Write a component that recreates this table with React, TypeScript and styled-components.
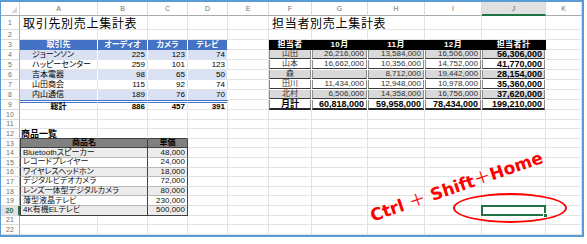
import React from "react";
import styled, { createGlobalStyle } from "styled-components";

const GlobalStyle = createGlobalStyle`
  html, body {
    margin: 0;
    padding: 0;
    background: #ffffff;
  }
  body {
    width: 587px;
    height: 244px;
    overflow: hidden;
    font-family: "Liberation Sans", "Noto Sans CJK JP", sans-serif;
  }
`;

type Align = "left" | "center" | "right";

const LETTERS = ["A", "B", "C", "D", "E", "F", "G", "H", "I", "J", "K"];
const COL_W = [19, 78, 50, 40, 40, 41, 43, 56, 57, 57, 64, 36];
const ROW_H = [14, 14, ...Array(8).fill(10), ...Array(13).fill(9.6)];
const GRID = "#e3e3e3";
const JP = `"Noto Sans CJK JP", sans-serif`;

const justify = (a?: Align) =>
  a === "right" ? "flex-end" : a === "center" ? "center" : "flex-start";

const Frame = styled.div`
  position: relative;
  display: grid;
  grid-template-columns: ${COL_W.map((w) => w + "px").join(" ")};
  grid-template-rows: ${ROW_H.map((h) => h + "px").join(" ")};
  width: max-content;
  border: 2px solid #5b9bd5;
  border-left-width: 1px;
  background: #fff;
  overflow: hidden;
`;

const Corner = styled.div`
  position: relative;
  box-sizing: border-box;
  border-right: 1px solid #d4d4d4;
  border-bottom: 1px solid #ababab;
  &::after {
    content: "";
    position: absolute;
    right: 2px;
    bottom: 2px;
    border-style: solid;
    border-width: 0 0 6px 6px;
    border-color: transparent transparent #d8d8d8 transparent;
  }
`;

const ColHead = styled.div<{ $active?: boolean }>`
  box-sizing: border-box;
  display: flex;
  align-items: center;
  justify-content: center;
  font-size: 7px;
  color: #6f6f6f;
  background: ${(p) => (p.$active ? "#e1e1e1" : "#fff")};
  border-right: 1px solid #dadada;
  border-bottom: ${(p) => (p.$active ? "2px solid #217346" : "1px solid #ababab")};
`;

const RowHead = styled.div<{ $active?: boolean }>`
  box-sizing: border-box;
  display: flex;
  align-items: center;
  justify-content: center;
  font-size: 7px;
  font-weight: ${(p) => (p.$active ? 700 : 400)};
  color: ${(p) => (p.$active ? "#217346" : "#6f6f6f")};
  background: ${(p) => (p.$active ? "#e1e1e1" : "#fff")};
  border-right: ${(p) => (p.$active ? "2px solid #217346" : "1px solid #ababab")};
  border-bottom: 1px solid #dadada;
`;

const Cell = styled.div<{ $span?: number; $align?: Align; $indent?: number }>`
  box-sizing: border-box;
  grid-column: span ${(p) => p.$span ?? 1};
  min-width: 0;
  display: flex;
  align-items: center;
  justify-content: ${(p) => justify(p.$align)};
  padding: 0 2px 0 ${(p) => p.$indent ?? 2}px;
  border-right: 1px solid ${GRID};
  border-bottom: 1px solid ${GRID};
  font-size: 8px;
  line-height: 1;
  color: #000;
  white-space: nowrap;
  font-feature-settings: "palt";
`;

const TitleCell = styled(Cell)`
  font-family: ${JP};
  font-size: 12px;
  letter-spacing: 0.7px;
  font-feature-settings: normal;
  padding-left: 3px;
`;

const SubTitle = styled(Cell)`
  font-family: ${JP};
  font-size: 9px;
  font-weight: 700;
  padding-left: 1px;
  border-bottom-color: #404040;
`;

/* 取引先別売上集計表 */
const BlueHead = styled(Cell)`
  background: #4472c4;
  color: #fff;
  font-weight: 700;
  border-right-color: #fff;
  border-bottom-color: #4472c4;
`;

const Band = styled(Cell)<{ $tint: boolean }>`
  background: ${(p) => (p.$tint ? "#d9e1f2" : "#fff")};
  border-right-color: ${(p) => (p.$tint ? "#fff" : GRID)};
  border-bottom-color: ${(p) => (p.$tint ? "#d9e1f2" : GRID)};
`;

const BlueTotal = styled(Cell)`
  font-weight: 700;
  border-top: 3px double #4472c4;
  padding-top: 1px;
`;

/* 担当者別売上集計表 */
const BlackHead = styled(Cell)`
  background: #000;
  color: #fff;
  font-weight: 700;
  letter-spacing: 0.4px;
  border-right-color: #000;
  border-bottom-color: #000;
`;

const BoxCell = styled(Cell)<{ $shade: boolean; $strong?: boolean }>`
  margin: 0 1px 1px 0;
  background: ${(p) => (p.$shade ? "#d9d9d9" : "#fff")};
  border-left: 1px solid #8c8c8c;
  border-right: 1px solid #8c8c8c;
  border-bottom: 1px solid #3a3a3a;
  color: ${(p) => (p.$strong ? "#000" : "#333")};
  font-size: ${(p) => (p.$strong ? 9 : 8)}px;
  font-weight: ${(p) => (p.$strong ? 700 : 400)};
`;

const BoxTotal = styled(BoxCell)`
  margin-bottom: 0;
  border-bottom: 2px solid #262626;
`;

/* 商品一覧 */
const GrayHead = styled(Cell)<{ $lead?: boolean }>`
  background: #808080;
  font-size: 8px;
  font-weight: 700;
  border-right: 1px solid #404040;
  border-left: ${(p) => (p.$lead ? "1px solid #404040" : "none")};
  border-bottom: 1px solid #404040;
`;

const ItemCell = styled(Cell)<{ $shade: boolean; $lead?: boolean; $last?: boolean }>`
  background: ${(p) => (p.$shade ? "#ececec" : "#fff")};
  font-size: 8px;
  color: #111;
  border-right: 1px solid #404040;
  border-left: ${(p) => (p.$lead ? "1px solid #404040" : "none")};
  border-bottom: 1px solid ${(p) => (p.$last ? "#404040" : "#b8b8b8")};
`;

const Selected = styled(Cell)`
  position: relative;
  &::before {
    content: "";
    position: absolute;
    inset: -1px -1px -1px -1px;
    border: 2px solid #217346;
  }
  &::after {
    content: "";
    position: absolute;
    right: -3px;
    bottom: -3px;
    width: 3px;
    height: 3px;
    background: #217346;
    border: 1px solid #fff;
  }
`;

const Callout = styled.div`
  position: absolute;
  left: 455px;
  top: 183px;
  transform: translate(-50%, -50%) rotate(-19deg);
  font-family: "DejaVu Sans", sans-serif;
  font-weight: 700;
  font-size: 17px;
  color: #ff0000;
  white-space: nowrap;
  pointer-events: none;
`;

const Plus = styled.span`
  font-family: ${JP};
  font-weight: 400;
`;

const Ring = styled.div`
  position: absolute;
  left: 452px;
  top: 191px;
  width: 114px;
  height: 30px;
  box-sizing: border-box;
  border: 2px solid #ff0000;
  border-radius: 50%;
  pointer-events: none;
`;

const SALES = [
  ["ジョーンソン", "225", "123", "74"],
  ["ハッピーセンター", "259", "101", "123"],
  ["吉本電器", "98", "65", "50"],
  ["山田商会", "115", "92", "74"],
  ["内山通信", "189", "76", "70"],
];

const STAFF = [
  ["山田", "26,216,000", "13,584,000", "16,506,000", "56,306,000"],
  ["山本", "16,662,000", "10,356,000", "14,752,000", "41,770,000"],
  ["森", "", "8,712,000", "19,442,000", "28,154,000"],
  ["田川", "11,434,000", "12,948,000", "10,978,000", "35,360,000"],
  ["北村", "6,506,000", "14,358,000", "16,756,000", "37,620,000"],
];

const ITEMS = [
  ["Bluetoothスピーカー", "48,000"],
  ["レコードプレイヤー", "24,000"],
  ["ワイヤレスヘッドホン", "18,000"],
  ["デジタルビデオカメラ", "72,000"],
  ["レンズ一体型デジタルカメラ", "80,000"],
  ["薄型液晶テレビ", "230,000"],
  ["4K有機ELテレビ", "500,000"],
];

const layout = new Map<string, { span: number; el: React.ReactElement }>();
const place = (addr: string, el: React.ReactElement, span = 1) =>
  layout.set(addr, { span, el });

place("A1", <TitleCell key="A1" $span={2}>取引先別売上集計表</TitleCell>, 2);
place("F1", <TitleCell key="F1" $span={3}>担当者別売上集計表</TitleCell>, 3);

["取引先", "オーディオ", "カメラ", "テレビ"].forEach((t, c) => {
  const addr = LETTERS[c] + 3;
  place(addr, <BlueHead key={addr} $align="center">{t}</BlueHead>);
});
SALES.forEach((row, r) => {
  row.forEach((v, c) => {
    const addr = LETTERS[c] + (r + 4);
    place(
      addr,
      <Band key={addr} $tint={r % 2 === 0} $align={c === 0 ? "left" : "right"} $indent={c === 0 ? 12 : 2}>
        {v}
      </Band>
    );
  });
});
["総計", "886", "457", "391"].forEach((v, c) => {
  const addr = LETTERS[c] + 9;
  place(addr, <BlueTotal key={addr} $align={c === 0 ? "center" : "right"}>{v}</BlueTotal>);
});

["担当者", "10月", "11月", "12月", "担当者計"].forEach((t, i) => {
  const addr = LETTERS[i + 5] + 3;
  place(addr, <BlackHead key={addr} $align="center">{t}</BlackHead>);
});
STAFF.forEach((row, r) => {
  row.forEach((v, i) => {
    const addr = LETTERS[i + 5] + (r + 4);
    place(
      addr,
      <BoxCell key={addr} $shade={r % 2 === 0} $strong={i === 4} $align={i === 0 ? "center" : "right"}>
        {v}
      </BoxCell>
    );
  });
});
["月計", "60,818,000", "59,958,000", "78,434,000", "199,210,000"].forEach((v, i) => {
  const addr = LETTERS[i + 5] + 9;
  place(addr, <BoxTotal key={addr} $shade={false} $strong $align={i === 0 ? "center" : "right"}>{v}</BoxTotal>);
});

place("A12", <SubTitle key="A12">商品一覧</SubTitle>);
place("B12", <SubTitle key="B12" />);
place("C12", <SubTitle key="C12" />);
place("A13", <GrayHead key="A13" $span={2} $lead $align="center">商品名</GrayHead>, 2);
place("C13", <GrayHead key="C13" $align="center">単価</GrayHead>);
ITEMS.forEach(([name, price], r) => {
  const row = r + 14;
  const shade = r % 2 === 0;
  const last = r === ITEMS.length - 1;
  place("A" + row, <ItemCell key={"A" + row} $span={2} $lead $shade={shade} $last={last}>{name}</ItemCell>, 2);
  place("C" + row, <ItemCell key={"C" + row} $shade={shade} $last={last} $align="right">{price}</ItemCell>);
});

place("J20", <Selected key="J20" />);

function Sheet() {
  const cells: React.ReactElement[] = [<Corner key="corner" />];
  LETTERS.forEach((l) => cells.push(<ColHead key={"h" + l} $active={l === "J"}>{l}</ColHead>));
  for (let r = 1; r <= 22; r++) {
    cells.push(<RowHead key={"r" + r} $active={r === 20}>{r}</RowHead>);
    let c = 0;
    while (c < LETTERS.length) {
      const addr = LETTERS[c] + r;
      const entry = layout.get(addr);
      if (entry) {
        cells.push(entry.el);
        c += entry.span;
      } else {
        cells.push(<Cell key={addr} />);
        c++;
      }
    }
  }
  return (
    <Frame>
      {cells}
      <Ring />
      <Callout>
        Ctrl <Plus>＋</Plus> Shift<Plus>＋</Plus>Home
      </Callout>
    </Frame>
  );
}

export default function App() {
  return (
    <>
      <GlobalStyle />
      <Sheet />
    </>
  );
}
